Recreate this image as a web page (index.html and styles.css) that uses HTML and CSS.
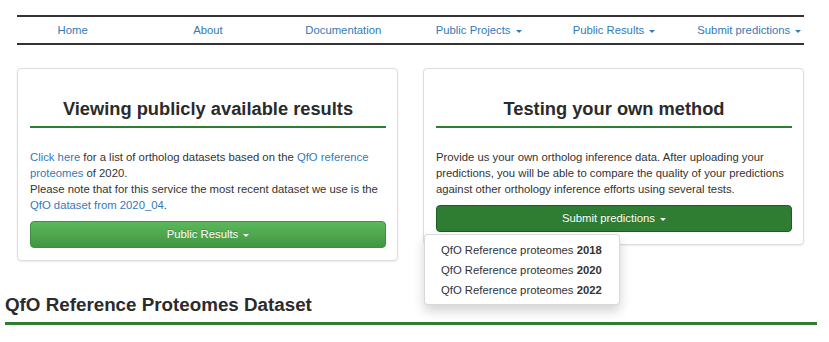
FILE: index.html
```html
<!DOCTYPE html>
<html lang="en">
<head>
    <meta charset="UTF-8">
    <meta name="viewport" content="width=device-width, initial-scale=1.0">
    <title>QfO Orthology Benchmark</title>
    <link rel="stylesheet" href="styles.css">
</head>
<body>
    <div class="page">
        <nav class="topnav">
            <ul class="nav-links">
                <li><a href="#">Home</a></li>
                <li><a href="#">About</a></li>
                <li><a href="#">Documentation</a></li>
                <li><a href="#">Public Projects <span class="caret"></span></a></li>
                <li><a href="#">Public Results <span class="caret"></span></a></li>
                <li><a href="#">Submit predictions <span class="caret"></span></a></li>
            </ul>
        </nav>

        <div class="intro-row">
            <div class="panel">
                <h2 class="panel-title">Viewing publicly available results</h2>
                <p><a href="#">Click here</a> for a list of ortholog datasets based on the <a href="#">QfO reference proteomes</a> of 2020.<br>
                Please note that for this service the most recent dataset we use is the <a href="#">QfO dataset from 2020_04</a>.</p>
                <button type="button" class="btn btn-success">Public Results <span class="caret"></span></button>
            </div>
            <div class="panel">
                <h2 class="panel-title">Testing your own method</h2>
                <p>Provide us your own ortholog inference data. After uploading your predictions, you will be able to compare the quality of your predictions against other orthology inference efforts using several tests.</p>
                <div class="dropdown">
                    <button type="button" class="btn btn-primary">Submit predictions <span class="caret"></span></button>
                    <ul class="dropdown-menu">
                        <li><a href="#">QfO Reference proteomes <b>2018</b></a></li>
                        <li><a href="#">QfO Reference proteomes <b>2020</b></a></li>
                        <li><a href="#">QfO Reference proteomes <b>2022</b></a></li>
                    </ul>
                </div>
            </div>
        </div>

        <h3 class="section-title">QfO Reference Proteomes Dataset</h3>
    </div>
</body>
</html>
```

FILE: styles.css
```css
body {
    font-family: "Liberation Sans", Arial, sans-serif;
    font-size: 11.3px;
    color: #333;
    margin: 0;
    padding: 0;
    background-color: #fff;
}
a {
    color: #337ab7;
    text-decoration: none;
}
.page {
    margin: 0 12px 0 5px;
}
.topnav {
    margin: 15px 13px 0 12px;
    border-top: 2px solid #333;
    border-bottom: 2px solid #333;
}
.nav-links {
    list-style: none;
    margin: 0 -13px 0 -12px;
    padding: 0;
    display: grid;
    grid-template-columns: repeat(6, 1fr);
}
.nav-links a {
    display: block;
    text-align: center;
    line-height: 26px;
}
.caret {
    display: inline-block;
    width: 0;
    height: 0;
    margin-left: 2px;
    vertical-align: middle;
    border-top: 3px solid;
    border-left: 3px solid transparent;
    border-right: 3px solid transparent;
}
.intro-row {
    display: flex;
    align-items: flex-start;
    gap: 25px;
    margin: 23px 13px 0 12px;
}
.panel {
    flex: 1;
    background: #fff;
    border: 1px solid #ddd;
    border-radius: 4px;
    padding: 0 11px 12px 12px;
    box-shadow: 0 1px 2px rgba(0, 0, 0, 0.08);
}
.panel-title {
    margin: 29px 0 21px;
    padding-bottom: 7px;
    border-bottom: 2px solid #2e7d32;
    font-size: 18.3px;
    font-weight: bold;
    line-height: 21px;
    text-align: center;
    color: #2b2b2b;
}
.panel p {
    margin: 0 0 8px;
    line-height: 16px;
}
.btn {
    display: block;
    width: 100%;
    padding: 5px 10px;
    font-family: inherit;
    font-size: 11.3px;
    line-height: 15px;
    color: #fff;
    border: 1px solid;
    border-radius: 4px;
    cursor: pointer;
    text-shadow: 0 -1px 0 rgba(0, 0, 0, 0.2);
}
.btn-success {
    background-image: linear-gradient(to bottom, #5cb85c 0, #419641 100%);
    border-color: #3e8f3e;
}
.btn-primary {
    background-color: #2e7d32;
    border-color: #1f5c23;
}
.dropdown {
    position: relative;
}
.dropdown-menu {
    position: absolute;
    top: calc(100% + 2px);
    left: -12px;
    margin: 0;
    padding: 5px 0 4px;
    list-style: none;
    background: #fff;
    border: 1px solid rgba(0, 0, 0, 0.15);
    border-radius: 4px;
    box-shadow: 0 6px 12px rgba(0, 0, 0, 0.175);
    z-index: 10;
}
.dropdown-menu a {
    display: block;
    padding: 0 17px 0 16px;
    line-height: 20px;
    color: #333;
    white-space: nowrap;
}
.section-title {
    margin: 33px 0 0;
    padding-bottom: 7px;
    border-bottom: 3px solid #2e7d32;
    font-size: 18.8px;
    font-weight: bold;
    line-height: 21px;
    color: #2b2b2b;
}
```
